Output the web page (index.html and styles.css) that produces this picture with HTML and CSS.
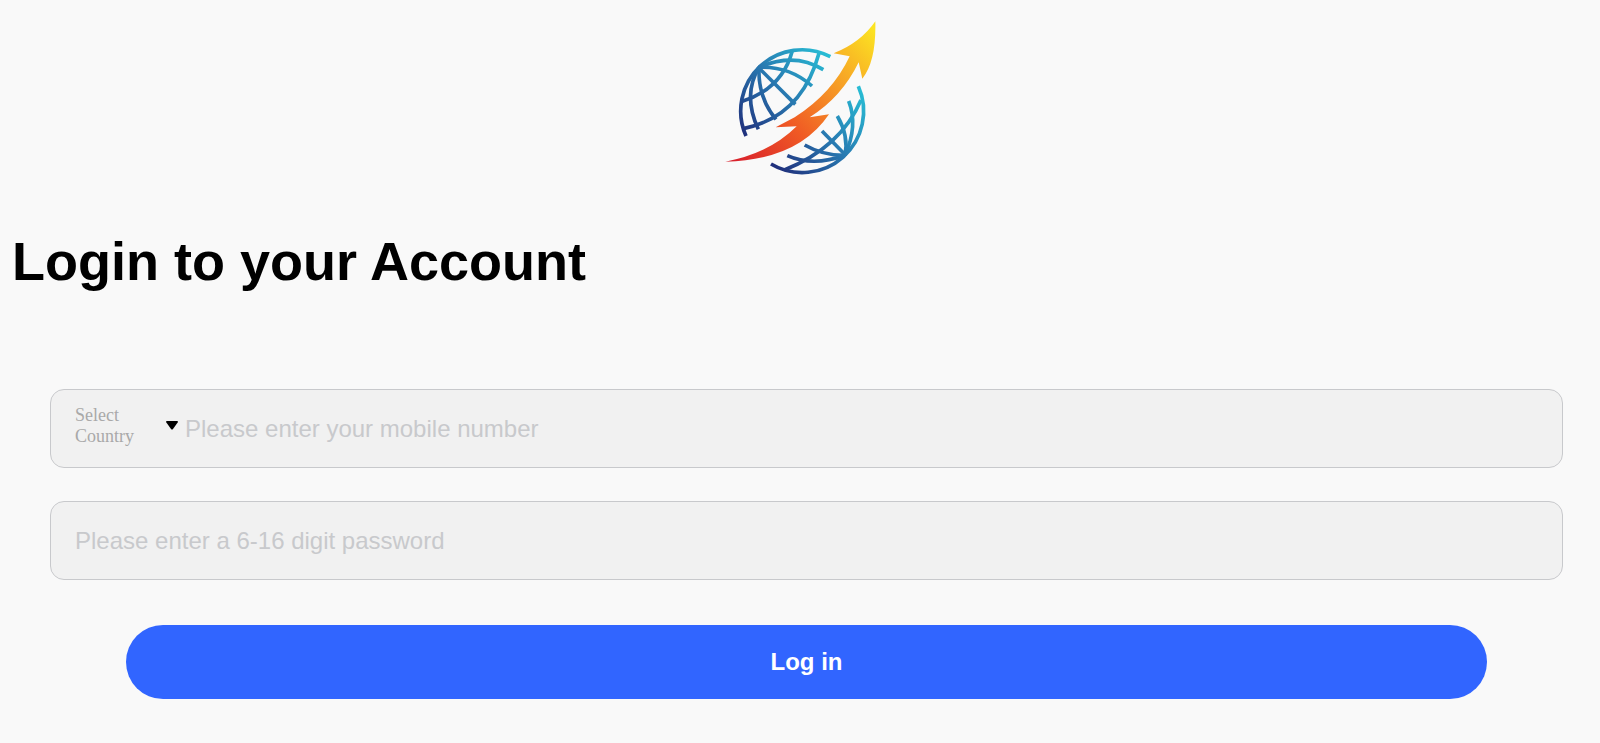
FILE: index.html
```html
<!DOCTYPE html>
<html lang="en">
<head>
    <meta charset="UTF-8">
    <meta name="viewport" content="width=device-width, initial-scale=1.0">
    <title>Login</title>
    <link rel="stylesheet" href="styles.css">
</head>
<body>
    <div class="logo">
        <svg viewBox="0 0 510 510" role="img" aria-label="Logo">
            <defs>
                <linearGradient id="top" gradientUnits="userSpaceOnUse" x1="80" y1="370" x2="340" y2="140">
                    <stop offset="0" stop-color="#20307c"/>
                    <stop offset="0.5" stop-color="#2878b0"/>
                    <stop offset="1" stop-color="#28bcd4"/>
                </linearGradient>
                <linearGradient id="bottom" gradientUnits="userSpaceOnUse" x1="180" y1="470" x2="440" y2="240">
                    <stop offset="0" stop-color="#20307c"/>
                    <stop offset="0.5" stop-color="#2878b0"/>
                    <stop offset="1" stop-color="#28bcd4"/>
                </linearGradient>
                <linearGradient id="arrow" gradientUnits="userSpaceOnUse" x1="60" y1="460" x2="480" y2="60">
                    <stop offset="0" stop-color="#d8202c"/>
                    <stop offset="0.35" stop-color="#f05a24"/>
                    <stop offset="0.65" stop-color="#f69a26"/>
                    <stop offset="1" stop-color="#fce422"/>
                </linearGradient>
            </defs>
            <g fill="none" stroke="url(#top)" stroke-width="11">
                <path d="M93 378A184 184 0 0 1 346 140"/>
                <path d="M132 172Q238 125 325 179"/>
                <path d="M132 172Q224 168 291 228"/>
                <path d="M128 170L241 283"/>
                <path d="M132 172Q128 262 183 328"/>
                <path d="M132 172Q82 255 130 358"/>
                <path d="M82 274Q202 235 232 122"/>
                <path d="M88 355Q260 320 312 130"/>
            </g>
            <g fill="none" stroke="url(#bottom)" stroke-width="11">
                <path d="M430 229A184 184 0 0 1 168 462"/>
                <path d="M390 436Q430 346 401 273"/>
                <path d="M390 436Q402 378 367 318"/>
                <path d="M392 436L321 363"/>
                <path d="M390 436Q325 437 269 405"/>
                <path d="M390 436Q294 471 217 437"/>
                <path d="M438 270Q378 412 208 480"/>
            </g>
            <path fill="url(#arrow)" d="M481 34Q437 98 356 130L404 139Q352 250 239 322L182 352L245 349Q164 430 31 455Q250 450 342 313L284 322Q380 262 431 157L442 206Q484 154 481 34Z"/>
        </svg>
    </div>
    <h1 class="title">Login to your Account</h1>
    <form class="login-form">
        <div class="field">
            <div class="country">
                <select class="country-select" aria-label="Country">
                    <option>Select Country</option>
                </select>
                <svg class="caret" viewBox="0 0 12 9" aria-hidden="true">
                    <path d="M1 0H11Q12 0 12 1L7 8Q6 9 5 8L0 1Q0 0 1 0Z"/>
                </svg>
            </div>
            <input class="field-input" type="tel" placeholder="Please enter your mobile number" aria-label="Mobile number">
        </div>
        <div class="field">
            <input class="field-input" type="password" placeholder="Please enter a 6-16 digit password" aria-label="Password">
        </div>
        <button class="login-button" type="submit">Log in</button>
    </form>
</body>
</html>
```
FILE: styles.css
```css
* {
    box-sizing: border-box;
}
body {
    margin: 0;
    background-color: #f9f9f9;
    font-family: Arial, "Liberation Sans", sans-serif;
}
.logo {
    display: flex;
    justify-content: center;
    padding-top: 10px;
}
.logo svg {
    width: 170px;
    height: 170px;
}
.title {
    margin: 49px 0 96px;
    padding: 0 12px;
    font-size: 54px;
    line-height: 64px;
    color: #000;
}
.login-form {
    display: flex;
    flex-direction: column;
    padding: 0 37px 40px 50px;
}
.field {
    display: flex;
    align-items: center;
    height: 79px;
    margin-bottom: 33px;
    padding: 0 24px;
    border: 1px solid #c8c9cc;
    border-radius: 14px;
    background-color: #f1f1f1;
}
.country {
    position: relative;
    width: 110px;
}
.country-select {
    display: block;
    width: 80px;
    margin-bottom: 6px;
    padding: 0;
    border: none;
    background: none;
    appearance: none;
    font-family: "Times New Roman", "Liberation Serif", serif;
    font-size: 18px;
    line-height: 21px;
    color: #a9a9a9;
    white-space: normal;
}
.caret {
    position: absolute;
    top: 16px;
    right: 7px;
    width: 12px;
    height: 9px;
    pointer-events: none;
}
.field-input {
    flex: 1;
    min-width: 0;
    padding: 0;
    border: none;
    outline: none;
    background: none;
    font-family: inherit;
    font-size: 24px;
}
.field-input::placeholder {
    color: #c8c9cc;
}
.login-button {
    align-self: center;
    width: 90%;
    height: 74px;
    margin-top: 12px;
    border: none;
    border-radius: 37px;
    background-color: #3165ff;
    font-family: inherit;
    font-size: 24px;
    font-weight: bold;
    color: #fff;
    cursor: pointer;
}
```
